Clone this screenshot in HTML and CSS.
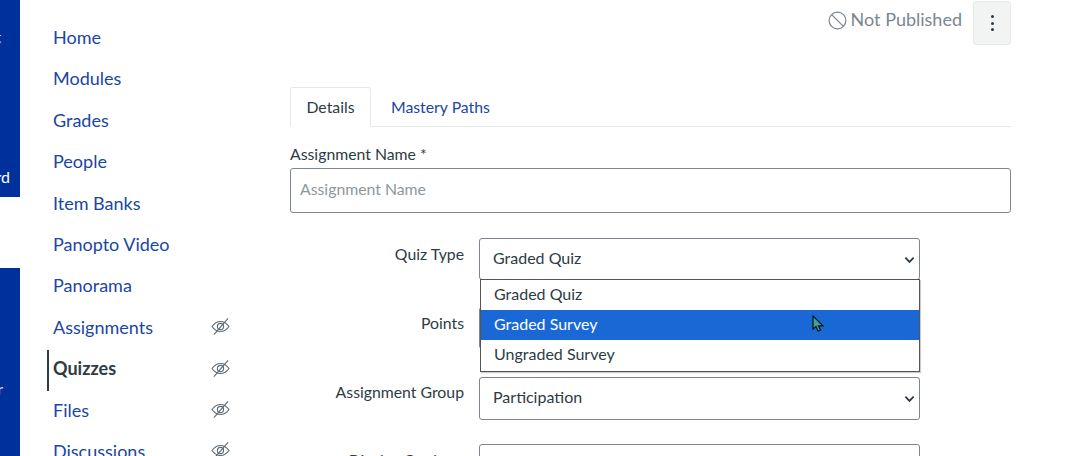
FILE: index.html
```html
<!DOCTYPE html>
<html lang="en">
<head>
    <meta charset="UTF-8">
    <title>Edit Quiz</title>
    <link rel="stylesheet" href="styles.css">
</head>
<body>
    <div class="global-strip">
        <div class="strip-block strip-top">
            <span class="strip-text strip-t">t</span>
            <span class="strip-text strip-rd">rd</span>
        </div>
        <div class="strip-block strip-bottom">
            <span class="strip-text strip-r">r</span>
        </div>
    </div>

    <nav class="course-nav">
        <a class="nav-link">Home</a>
        <a class="nav-link">Modules</a>
        <a class="nav-link">Grades</a>
        <a class="nav-link">People</a>
        <a class="nav-link">Item Banks</a>
        <a class="nav-link">Panopto Video</a>
        <a class="nav-link">Panorama</a>
        <a class="nav-link">Assignments
            <svg class="eye" viewBox="0 0 20 18"><path d="M1 9c2.500-3.500 5.500-5.300 9-5.300S16.500 5.500 19 9c-2.500 3.500-5.500 5.300-9 5.300S3.500 12.500 1 9z"/><circle cx="10" cy="9" r="3.300"/><path d="M3 17.500L18 .5"/></svg>
        </a>
        <a class="nav-link active">Quizzes
            <svg class="eye" viewBox="0 0 20 18"><path d="M1 9c2.500-3.500 5.500-5.300 9-5.300S16.500 5.500 19 9c-2.500 3.500-5.500 5.300-9 5.300S3.500 12.500 1 9z"/><circle cx="10" cy="9" r="3.300"/><path d="M3 17.500L18 .5"/></svg>
        </a>
        <a class="nav-link">Files
            <svg class="eye" viewBox="0 0 20 18"><path d="M1 9c2.500-3.500 5.500-5.300 9-5.300S16.500 5.500 19 9c-2.500 3.500-5.500 5.300-9 5.300S3.500 12.500 1 9z"/><circle cx="10" cy="9" r="3.300"/><path d="M3 17.500L18 .5"/></svg>
        </a>
        <a class="nav-link">Discussions
            <svg class="eye" viewBox="0 0 20 18"><path d="M1 9c2.500-3.500 5.500-5.300 9-5.300S16.500 5.500 19 9c-2.500 3.500-5.500 5.300-9 5.300S3.500 12.500 1 9z"/><circle cx="10" cy="9" r="3.300"/><path d="M3 17.500L18 .5"/></svg>
        </a>
    </nav>

    <main class="content">
        <div class="header-bar">
            <span class="status">
                <svg class="status-icon" viewBox="0 0 20 20"><circle cx="10" cy="10" r="8.800"/><path d="M3.800 3.800l12.400 12.400"/></svg>
                Not Published
            </span>
            <button class="kebab"><i></i><i></i><i></i></button>
        </div>

        <div class="tabs">
            <span class="tab selected">Details</span>
            <span class="tab">Mastery Paths</span>
        </div>

        <label class="name-label">Assignment Name *</label>
        <div class="text-input placeholder">Assignment Name</div>

        <div class="form-row quiz-row">
            <label class="row-label">Quiz Type</label>
            <div class="select">Graded Quiz<svg class="chevron" viewBox="0 0 12 8"><path d="M1.500 1.500L6 6l4.500-4.500"/></svg></div>
            <div class="dropdown">
                <div class="option">Graded Quiz</div>
                <div class="option highlighted">Graded Survey</div>
                <div class="option">Ungraded Survey</div>
            </div>
            <svg class="cursor" viewBox="0 0 12 18"><path d="M1 1v13l3-2.500 2 4.500 2.500-1-2-4.200H11z"/></svg>
        </div>

        <div class="form-row points-row">
            <label class="row-label">Points</label>
            <div class="select"></div>
        </div>

        <div class="form-row group-row">
            <label class="row-label">Assignment Group</label>
            <div class="select">Participation<svg class="chevron" viewBox="0 0 12 8"><path d="M1.500 1.500L6 6l4.500-4.500"/></svg></div>
        </div>

        <div class="form-row display-row">
            <label class="row-label">Display Grade as</label>
            <div class="select"></div>
        </div>
    </main>
</body>
</html>
```

FILE: styles.css
```css
html, body {
    margin: 0;
    height: 456px;
    overflow: hidden;
}
body {
    display: flex;
    font-family: Lato, "Open Sans", sans-serif;
    font-size: 16px;
    color: #2d3b45;
    background-color: #fff;
}

/* global nav leftovers */
.global-strip {
    width: 20px;
    flex-shrink: 0;
    display: flex;
    flex-direction: column;
}
.strip-block {
    position: relative;
    overflow: hidden;
    background-color: #00309c;
    color: #fff;
    font-size: 16px;
}
.strip-top {
    height: 197px;
    margin-bottom: 71px;
}
.strip-bottom {
    height: 188px;
}
.strip-text {
    position: absolute;
    right: 10px;
    line-height: 16px;
}
.strip-t {
    top: 29px;
    right: 19px;
}
.strip-rd {
    top: 169px;
}
.strip-r {
    top: 113px;
    right: 17px;
    color: #f4c6e8;
}

/* course nav */
.course-nav {
    width: 183px;
    margin-left: 27px;
    flex-shrink: 0;
    padding-top: 18.800px;
    display: flex;
    flex-direction: column;
}
.nav-link {
    height: 41.400px;
    flex-shrink: 0;
    padding-left: 4px;
    padding-bottom: 5px;
    border-left: 2px solid transparent;
    display: flex;
    align-items: center;
    justify-content: space-between;
    font-size: 18px;
    color: #1a46a3;
    box-sizing: border-box;
}
.nav-link.active {
    border-left-color: #2d3b45;
    color: #2d3b45;
    font-weight: 700;
}
.eye {
    width: 19px;
    height: 17px;
    fill: none;
    stroke: #5f6b74;
    stroke-width: 1.200;
}

/* main form */
.content {
    width: 721px;
    margin-left: 60px;
    flex-shrink: 0;
}
.header-bar {
    height: 87px;
    padding-top: 1px;
    box-sizing: border-box;
    display: flex;
    justify-content: flex-end;
    align-items: flex-start;
    gap: 11px;
}
.status {
    margin-top: 6px;
    display: flex;
    align-items: center;
    gap: 4px;
    font-size: 18px;
    line-height: 24px;
    color: #7b868f;
}
.status-icon {
    width: 19px;
    height: 19px;
    margin-top: 2px;
    fill: none;
    stroke: #7b868f;
    stroke-width: 1.300;
}
.kebab {
    width: 38px;
    height: 44px;
    padding: 0;
    border: 1px solid #e6e9ea;
    border-radius: 3px;
    background-color: #f2f4f4;
    display: flex;
    flex-direction: column;
    align-items: center;
    justify-content: center;
    gap: 3.500px;
}
.kebab i {
    width: 3px;
    height: 3px;
    border-radius: 50%;
    background-color: #2d3b45;
}
.tabs {
    display: flex;
    height: 40px;
    box-sizing: border-box;
    border-bottom: 1px solid #e6e8ea;
}
.tab {
    width: 81px;
    height: 40px;
    box-sizing: border-box;
    text-align: center;
    line-height: 37px;
    font-size: 15.800px;
    color: #1a46a3;
    border: 1px solid transparent;
    border-bottom: none;
}
.tab + .tab {
    width: auto;
    padding: 0 20px 0 19px;
}
.tab.selected {
    color: #2d3b45;
    background-color: #fff;
    border-color: #e6e8ea;
    border-radius: 3px 3px 0 0;
}
.name-label {
    display: block;
    margin-top: 17px;
    height: 24px;
    line-height: 20px;
    font-size: 15.800px;
}
.text-input {
    height: 45px;
    box-sizing: border-box;
    border: 1px solid #7b868f;
    border-radius: 3px;
    padding-left: 9px;
    line-height: 40px;
    font-size: 15.800px;
}
.placeholder {
    color: #8e979e;
}
.form-row {
    position: relative;
    display: flex;
    gap: 15px;
}
.row-label {
    width: 174px;
    text-align: right;
    line-height: 20px;
    padding-top: 6px;
    font-size: 15.800px;
}
.select {
    position: relative;
    width: 441px;
    height: 42px;
    box-sizing: border-box;
    border: 1px solid #7b868f;
    border-radius: 3px;
    padding-left: 13px;
    line-height: 37px;
}
.chevron {
    position: absolute;
    right: 4px;
    top: 17px;
    width: 11px;
    height: 8px;
    fill: none;
    stroke: #2d3b45;
    stroke-width: 2;
}
.quiz-row {
    margin-top: 25px;
}
.points-row {
    margin-top: 27px;
}
.group-row {
    margin-top: 28px;
}
.group-row .row-label {
    padding-top: 5px;
}
.group-row .select {
    height: 43px;
}
.display-row {
    margin-top: 24px;
}
.dropdown {
    position: absolute;
    z-index: 2;
    left: 190px;
    top: 41px;
    width: 440px;
    height: 93px;
    box-sizing: border-box;
    padding-bottom: 1px;
    border: 1px solid #555;
    background-color: #fff;
    box-shadow: 1px 1px 1px #ccc;
}
.option {
    height: 30px;
    padding-left: 13px;
    line-height: 27px;
}
.highlighted {
    background-color: #1a68d6;
    color: #fff;
}
.cursor {
    position: absolute;
    z-index: 3;
    left: 522px;
    top: 77px;
    width: 12px;
    height: 18px;
    fill: #3fa39c;
    stroke: #111;
    stroke-width: 1.200;
}
```
